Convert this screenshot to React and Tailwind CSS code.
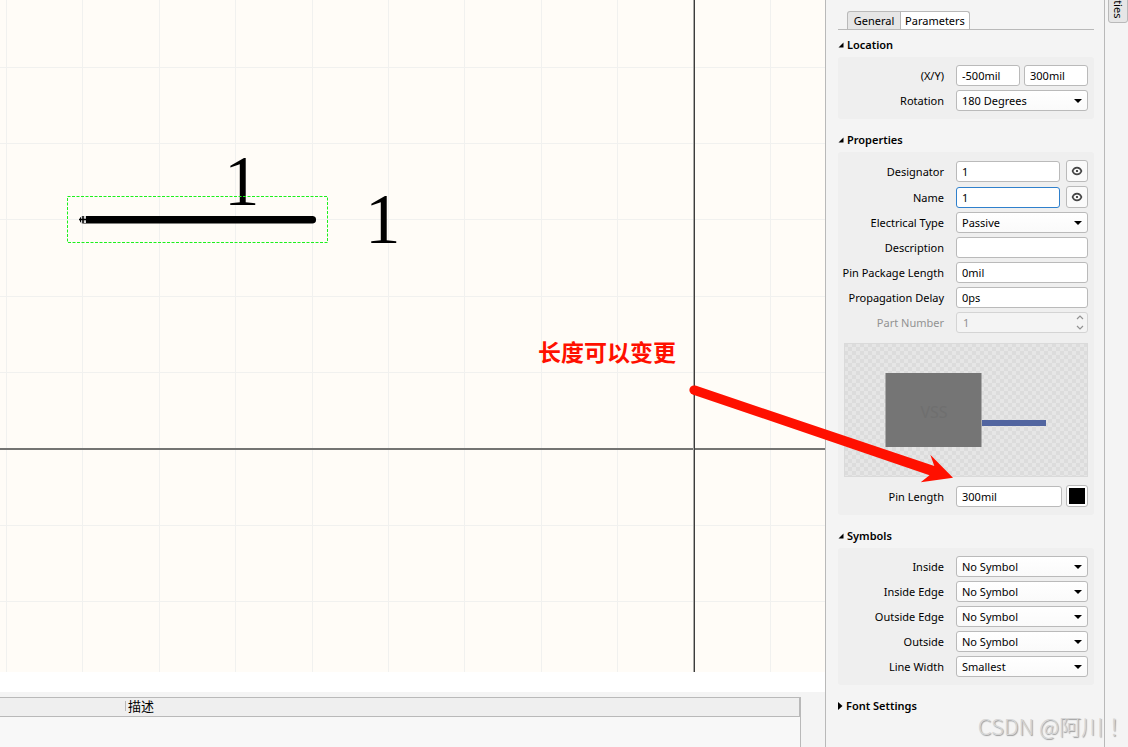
import { useState } from "react";
import clsx from "clsx";

const GRID_STEP = 76.4;
const GRID_X = Array.from({ length: 30 }, (_, i) => Math.floor(6.5 + GRID_STEP * i));
const GRID_Y = Array.from({ length: 20 }, (_, i) => Math.floor(67 + GRID_STEP * i));

const DEGREES = ["0 Degrees", "90 Degrees", "180 Degrees", "270 Degrees"];
const ELECTRICAL = ["Passive", "Input", "I/O", "Output", "Power"];
const WIDTHS = ["Smallest", "Small", "Medium", "Large"];
const SYMBOLS = [
  { id: "inside", label: "Inside" },
  { id: "inside-edge", label: "Inside Edge" },
  { id: "outside-edge", label: "Outside Edge" },
  { id: "outside", label: "Outside" },
];

function Row({ id, label, disabled, tall, children }) {
  return (
    <div
      className={clsx(
        "flex justify-end gap-3",
        tall ? "h-[22px] items-end" : "h-[21px] items-center",
      )}
    >
      <label
        htmlFor={id}
        className={clsx(
          "flex min-w-0 flex-1 justify-end leading-[21px] whitespace-nowrap",
          disabled && "text-[#929292]",
        )}
      >
        {label}
      </label>
      <div className="flex w-[132px] shrink-0 items-end">{children}</div>
    </div>
  );
}

function TextBox({ id, value, className, active, ...rest }) {
  return (
    <input
      id={id}
      type="text"
      defaultValue={value}
      className={clsx(
        "h-[21px] min-w-0 flex-1 rounded-[3px] border bg-white px-[5px] outline-none",
        active ? "border-[#2f80cc]" : "border-[#bababa]",
        className,
      )}
      {...rest}
    />
  );
}

function Dropdown({ id, value, options }) {
  return (
    <div className="relative w-full">
      <select
        id={id}
        defaultValue={value}
        className="block h-[21px] w-full appearance-none rounded-[3px] border border-[#bababa] bg-linear-to-b from-white to-[#fafafa] px-[5px] pt-[2px] outline-none"
      >
        {options.map((option) => (
          <option key={option}>{option}</option>
        ))}
      </select>
      <svg
        viewBox="0 0 8 4"
        className="pointer-events-none absolute top-[9px] right-[6px] h-1 w-2"
      >
        <path d="M0 0h8L4 4z" fill="#000" />
      </svg>
    </div>
  );
}

function EyeButton({ label }) {
  return (
    <button
      type="button"
      aria-label={label}
      className="ml-1.5 flex h-[22px] w-[22px] shrink-0 items-center justify-center rounded-[3px] border border-[#bababa] bg-[#fafafa]"
    >
      <svg viewBox="0 0 12 10" className="h-[10px] w-3">
        <path
          d="M1.500 5C2.500 2.500 4 1.600 6 1.600S9.500 2.500 10.500 5C9.500 7.500 8 8.400 6 8.400S2.500 7.500 1.500 5z"
          fill="#fafafa"
          stroke="#444"
          strokeWidth="1.600"
        />
        <circle cx="6" cy="5" r="1.100" fill="#222" />
      </svg>
    </button>
  );
}

function Section({ title, initialOpen = true, children }) {
  const [open, setOpen] = useState(initialOpen);

  return (
    <section className="mb-[13px]">
      <button
        type="button"
        aria-expanded={open}
        onClick={() => setOpen(!open)}
        className="flex h-4 items-center gap-[3px] font-semibold"
      >
        <svg viewBox="0 0 5 8" className={clsx("h-2", open ? "w-[6px]" : "w-[5px]")}>
          {open ? <path d="M5 1.500v5H0z" /> : <path d="M0 0v8l4.500-4z" />}
        </svg>
        {title}
      </button>
      {open && children && (
        <div className="mt-1 flex flex-col gap-1 rounded-[3px] bg-[#efefef] px-1.5 py-2">
          {children}
        </div>
      )}
    </section>
  );
}

function PinPreview() {
  return (
    <svg viewBox="0 0 244 134" className="mt-1.5 mb-1 block h-[134px] w-full">
      <defs>
        <pattern id="checker" width="8" height="8" patternUnits="userSpaceOnUse">
          <rect width="8" height="8" fill="#e6e6e6" />
          <rect width="4" height="4" fill="#dcdcdc" />
          <rect x="4" y="4" width="4" height="4" fill="#dcdcdc" />
        </pattern>
      </defs>
      <rect width="244" height="134" fill="url(#checker)" />
      <rect x="0.5" y="0.5" width="243" height="133" fill="none" stroke="#dadada" />
      <rect x="41.500" y="30" width="96" height="74" fill="#757575" />
      <text
        x="90"
        y="75"
        textAnchor="middle"
        fontSize="16"
        fill="#6f6f6f"
        fontFamily="Noto Sans, sans-serif"
      >
        VSS
      </text>
      <rect x="138" y="77" width="64" height="6" fill="#5265a0" />
    </svg>
  );
}

function Schematic() {
  return (
    <div className="relative min-h-0 flex-1 overflow-hidden bg-[#fffcf7]">
      <svg className="absolute inset-0 h-full w-full">
        <g fill="#f1f1ef">
          {GRID_X.map((x) => (
            <rect key={x} x={x} y="0" width="1" height="100%" />
          ))}
          {GRID_Y.map((y) => (
            <rect key={y} x="0" y={y} width="100%" height="1" />
          ))}
        </g>
        <rect x="0" y="448" width="100%" height="2" fill="#747472" />
        <rect x="693" y="0" width="1" height="100%" fill="#aaa9a6" />
        <rect x="694" y="0" width="1" height="100%" fill="#3c3c3c" />

        {/* Pin, its hot spot and its two texts */}
        <path d="M83.500 219.800H312.300" stroke="#000" strokeWidth="7.500" strokeLinecap="round" />
        <path d="M81 216h5v7h-5z" fill="#d8d8d8" />
        <path d="M79 219.500h8M83 216v7" stroke="#000" strokeWidth="1.500" />
        <g fontFamily="Liberation Serif, serif" fontSize="71" fill="#000">
          <text x="224" y="205">1</text>
          <text x="365" y="243">1</text>
        </g>
        <rect
          x="67.500"
          y="196.500"
          width="260"
          height="46"
          fill="none"
          stroke="#1df01d"
          strokeDasharray="3 1.500"
        />
      </svg>
      <p className="absolute top-[335px] left-[538px] font-['Noto_Sans_CJK_SC',sans-serif] text-[23px] leading-8 font-bold text-[#ff1000]">
        长度可以变更
      </p>
    </div>
  );
}

function MessageTable() {
  return (
    <div className="h-[55px] shrink-0 bg-[#f4f4f4] pt-[5px] pr-6">
      <div className="h-full border-t border-r border-[#b9b9b9] bg-[#f8f8f8]">
        <table className="w-full border-collapse text-left font-['Noto_Sans_CJK_SC',sans-serif] text-[13px] leading-4">
          <thead className="bg-[#efefef]">
            <tr className="h-[18px] border-b border-[#b9b9b9]">
              <th className="w-[125px] p-0" />
              <th className="border-r border-[#b9b9b9] p-0 align-top font-normal">
                <div className="flex items-center gap-[2px]">
                  <span className="h-[10px] w-px bg-[#b9b9b9]" />
                  描述
                </div>
              </th>
            </tr>
          </thead>
        </table>
      </div>
    </div>
  );
}

function PropertiesPanel() {
  return (
    <aside className="w-[280px] shrink-0 border-x border-[#b9b9b9] bg-[#f4f4f4] pt-[11px] pr-[10px] pl-3">
      <div className="mb-[7px] flex border-b border-[#b9b9b9] pl-[9px]">
        <button
          type="button"
          className="h-[18px] w-[54px] rounded-tl-[3px] border border-b-0 border-[#b9b9b9] bg-[#e6e6e6] pt-px"
        >
          General
        </button>
        <button
          type="button"
          className="h-[18px] w-[69px] rounded-tr-[3px] border border-b-0 border-l-0 border-[#b9b9b9] bg-white pt-px"
        >
          Parameters
        </button>
      </div>

      <Section title="Location">
        <Row id="loc-x" label="(X/Y)">
          <div className="flex w-full gap-1">
            <TextBox id="loc-x" value="-500mil" />
            <TextBox id="loc-y" value="300mil" aria-label="Y" />
          </div>
        </Row>
        <Row id="rotation" label="Rotation">
          <Dropdown id="rotation" value="180 Degrees" options={DEGREES} />
        </Row>
      </Section>

      <Section title="Properties">
        <Row id="designator" label="Designator" tall>
          <TextBox id="designator" value="1" />
          <EyeButton label="Show designator" />
        </Row>
        <Row id="name" label="Name" tall>
          <TextBox id="name" value="1" active />
          <EyeButton label="Show name" />
        </Row>
        <Row id="electrical" label="Electrical Type">
          <Dropdown id="electrical" value="Passive" options={ELECTRICAL} />
        </Row>
        <Row id="description" label="Description">
          <TextBox id="description" value="" />
        </Row>
        <Row id="package-length" label="Pin Package Length">
          <TextBox id="package-length" value="0mil" />
        </Row>
        <Row id="delay" label="Propagation Delay">
          <TextBox id="delay" value="0ps" />
        </Row>
        <Row id="part-number" label="Part Number" disabled>
          <div className="relative flex w-full">
            <input
              id="part-number"
              type="text"
              inputMode="numeric"
              defaultValue="1"
              disabled
              className="h-[21px] w-full rounded-[3px] border border-[#d4d4d4] bg-[#f4f4f4] px-1.5 text-[#929292]"
            />
            <svg
              viewBox="0 0 8 15"
              className="pointer-events-none absolute top-[3px] right-1 h-[15px] w-2"
              fill="none"
              stroke="#929292"
              strokeWidth="1.200"
            >
              <path d="M1 4l3-3 3 3M1 11l3 3 3-3" />
            </svg>
          </div>
        </Row>
        <PinPreview />
        <Row id="pin-length" label="Pin Length" tall>
          <TextBox id="pin-length" value="300mil" />
          <button
            type="button"
            aria-label="Pin color"
            className="ml-1 h-[22px] w-[22px] shrink-0 rounded-[3px] border border-[#bababa] bg-white p-[2px]"
          >
            <span className="block h-full w-full bg-black" />
          </button>
        </Row>
      </Section>

      <Section title="Symbols">
        {SYMBOLS.map((item) => (
          <Row key={item.id} id={item.id} label={item.label}>
            <Dropdown id={item.id} value="No Symbol" options={["No Symbol", "Dot", "Clock"]} />
          </Row>
        ))}
        <Row id="line-width" label="Line Width">
          <Dropdown id="line-width" value="Smallest" options={WIDTHS} />
        </Row>
      </Section>

      <Section title="Font Settings" initialOpen={false} />
    </aside>
  );
}

export default function App() {
  return (
    <div className="relative flex h-screen overflow-hidden bg-[#f4f4f4] font-['Noto_Sans',sans-serif] text-[11px] text-black">
      <main className="flex min-w-0 flex-1 flex-col">
        <Schematic />
        <div className="h-5 shrink-0 bg-white" />
        <MessageTable />
      </main>

      <PropertiesPanel />

      {/* Docked side tab, runs off the top edge */}
      <nav className="flex h-[23px] w-[23px] shrink-0 items-end pl-[3px]">
        <button
          type="button"
          className="flex h-20 w-5 shrink-0 items-end justify-center rounded-b-[3px] border border-[#b9b9b9] bg-[#e6e6e6] pb-1 [writing-mode:vertical-rl]"
        >
          <span className="flex h-full w-full items-center justify-end">Properties</span>
        </button>
      </nav>

      {/* Arrow to the pin length field */}
      <svg className="pointer-events-none absolute inset-0 h-full w-full" fill="#ff1000">
        <circle cx="694" cy="390" r="4.600" />
        <path d="M695.500 385.600L934.300 466L930.300 454.700L953 477.700L920.700 482.300L929.500 475.200L692.500 394.400z" />
      </svg>

      <p className="pointer-events-none absolute right-[3px] bottom-1.5 font-['Noto_Sans_CJK_TC',sans-serif] text-[22px] leading-8 font-light text-[#d6d6d6] [text-shadow:1px_1px_1px_#999]">
        CSDN @阿川！
      </p>
    </div>
  );
}
